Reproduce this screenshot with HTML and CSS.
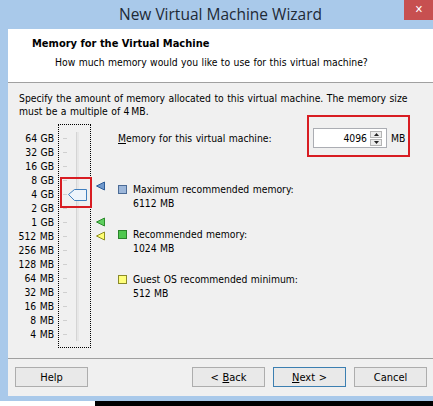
FILE: index.html
```html
<!DOCTYPE html>
<html>
<head>
<meta charset="utf-8">
<title>New Virtual Machine Wizard</title>
<link rel="stylesheet" href="styles.css">
</head>
<body>
<div class="window">
  <div class="titlebar">
    <div class="title">New Virtual Machine Wizard</div>
    <div class="close">&#x2715;</div>
  </div>
  <div class="client">
    <div class="header">
      <div class="h-title">Memory for the Virtual Machine</div>
      <div class="h-sub">How much memory would you like to use for this virtual machine?</div>
    </div>
    <div class="body">
      <p class="desc">Specify the amount of memory allocated to this virtual machine. The memory size<br>must be a multiple of 4&#8201;MB.</p>
      <div class="main">
        <ul class="scale">
          <li>64 GB</li><li>32 GB</li><li>16 GB</li><li>8 GB</li><li>4 GB</li><li>2 GB</li><li>1 GB</li>
          <li>512 MB</li><li>256 MB</li><li>128 MB</li><li>64 MB</li><li>32 MB</li><li>16 MB</li><li>8 MB</li><li>4 MB</li>
        </ul>
        <div class="slider">
          <svg width="31" height="222" viewBox="0 0 31 222">
            <g stroke="#cfcfcf" stroke-width="1">
              <line x1="4" y1="13.5" x2="8" y2="13.5"/>
              <line x1="4" y1="27.5" x2="8" y2="27.5"/>
              <line x1="4" y1="41.5" x2="8" y2="41.5"/>
              <line x1="4" y1="55.5" x2="8" y2="55.5"/>
              <line x1="4" y1="69.5" x2="8" y2="69.5"/>
              <line x1="4" y1="83.5" x2="8" y2="83.5"/>
              <line x1="4" y1="97.5" x2="8" y2="97.5"/>
              <line x1="4" y1="111.5" x2="8" y2="111.5"/>
              <line x1="4" y1="125.5" x2="8" y2="125.5"/>
              <line x1="4" y1="139.5" x2="8" y2="139.5"/>
              <line x1="4" y1="153.5" x2="8" y2="153.5"/>
              <line x1="4" y1="167.5" x2="8" y2="167.5"/>
              <line x1="4" y1="181.5" x2="8" y2="181.5"/>
              <line x1="4" y1="195.5" x2="8" y2="195.5"/>
              <line x1="4" y1="209.5" x2="8" y2="209.5"/>
            </g>
            <rect x="17" y="7" width="3" height="209" fill="#e7e7e7"/>
            <line x1="17.5" y1="7" x2="17.5" y2="216" stroke="#d4d4d4"/>
            <path d="M9.5 69.5 L15.5 64.5 L27.5 64.5 L27.5 75.5 L15.5 75.5 Z" fill="#eef4fb" stroke="#3f7fbf" stroke-width="1"/>
          </svg>
          <div class="annot thumb-annot"></div>
        </div>
        <div class="markers">
          <svg width="14" height="224" viewBox="0 0 14 224">
            <polygon points="4.5,62 12.5,58 12.5,66" fill="#6f98cc" stroke="#2d5d98"/>
            <polygon points="4.5,98 12.5,94 12.5,102" fill="#5fd05f" stroke="#2e8c2e"/>
            <polygon points="4.5,112 12.5,108 12.5,116" fill="#ffff72" stroke="#8f8f20"/>
          </svg>
        </div>
        <div class="info">
          <div class="mem-row">
            <label class="mem-label"><u>M</u>emory for this virtual machine:</label>
            <div class="spin-wrap">
              <div class="spin">
                <span class="val">4096</span>
                <div class="arrows">
                  <div class="arr"><svg width="7" height="4" viewBox="0 0 7 4"><polygon points="3.5,0 7,4 0,4" fill="#222"/></svg></div>
                  <div class="arr"><svg width="7" height="4" viewBox="0 0 7 4"><polygon points="0,0 7,0 3.5,4" fill="#222"/></svg></div>
                </div>
              </div>
              <span class="unit">MB</span>
              <div class="annot mem-annot"></div>
            </div>
          </div>
          <div class="legend">
            <div class="item"><span class="sq sq-blue"></span><div>Maximum recommended memory:<br>6112 MB</div></div>
            <div class="item"><span class="sq sq-green"></span><div>Recommended memory:<br>1024 MB</div></div>
            <div class="item"><span class="sq sq-yellow"></span><div>Guest OS recommended minimum:<br>512 MB</div></div>
          </div>
        </div>
      </div>
    </div>
    <div class="footer">
      <button class="btn">Help</button>
      <div class="btn-group">
        <button class="btn">&lt; <u>B</u>ack</button>
        <button class="btn btn-default"><u>N</u>ext &gt;</button>
        <button class="btn">Cancel</button>
      </div>
    </div>
  </div>
  <div class="bottom"><div class="bottom-white"></div><div class="bottom-black"></div></div>
</div>
</body>
</html>
```

FILE: styles.css
```css
* { box-sizing: border-box; }
html, body { margin: 0; padding: 0; }
body {
  background: #ffffff;
  font-family: "DejaVu Sans Condensed", "DejaVu Sans", sans-serif;
  font-stretch: condensed;
  font-size: 10.3px;
  word-spacing: 0.5px;
  color: #000;
}
.window {
  width: 433px;
  height: 406px;
  background: #a9c9ea;
  display: flex;
  flex-direction: column;
  overflow: hidden;
}
.titlebar {
  height: 29px;
  display: grid;
  grid-template-columns: 1fr;
  padding-left: 8px;
}
.title {
  grid-area: 1 / 1;
  text-align: center;
  font-family: "Open Sans", "Noto Sans", sans-serif;
  font-stretch: normal;
  font-size: 15.5px;
  word-spacing: 0;
  line-height: 29px;
  color: #1e2a36;
}
.close {
  grid-area: 1 / 1;
  justify-self: end;
  align-self: start;
  width: 29px;
  height: 20px;
  background: #c75050;
  color: #fff;
  font-family: "DejaVu Sans", sans-serif;
  font-size: 11px;
  font-weight: bold;
  line-height: 20px;
  text-align: center;
  padding-left: 1px;
}
.client {
  margin-left: 8px;
  height: 367px;
  background: #f0f0f0;
  display: flex;
  flex-direction: column;
}
.header {
  height: 54px;
  background: #fff;
  border-bottom: 1px solid #a0a0a0;
  padding-top: 8px;
}
.h-title {
  font-weight: bold;
  font-size: 11px;
  word-spacing: 0;
  line-height: 14px;
  padding-left: 24px;
}
.h-sub {
  line-height: 14px;
  padding-left: 47px;
  margin-top: 4px;
}
.body {
  height: 275px;
  padding-top: 9px;
}
.desc {
  margin: 0 0 6px 11px;
  line-height: 13px;
}
.main {
  display: flex;
  align-items: flex-start;
}
.scale {
  list-style: none;
  margin: 7px 0 0;
  padding: 0;
  width: 46px;
  text-align: right;
}
.scale li {
  line-height: 14px;
  white-space: nowrap;
}
.slider {
  position: relative;
  margin-left: 4px;
  width: 33px;
  height: 224px;
  border: 1px dotted #000;
}
.slider svg { display: block; }
.annot {
  position: absolute;
  border: 2px solid #d81c22;
}
.thumb-annot {
  left: 1px;
  top: 52px;
  width: 32px;
  height: 31px;
}
.markers {
  width: 14px;
  margin-left: 1px;
}
.markers svg { display: block; }
.info {
  margin-left: 12px;
  flex: 1;
}
.mem-row {
  display: flex;
  align-items: center;
  padding-top: 4px;
}
.mem-label {
  width: 195px;
  line-height: 14px;
}
.spin-wrap {
  position: relative;
  display: flex;
  align-items: center;
}
.spin {
  width: 74px;
  height: 20px;
  background: #fff;
  border: 1px solid #abadb3;
  display: flex;
  align-items: center;
  padding-right: 4px;
}
.val {
  flex: 1;
  text-align: right;
  margin-right: 3px;
}
.arrows {
  display: flex;
  flex-direction: column;
  gap: 1px;
}
.arr {
  width: 12px;
  height: 7px;
  border: 1px solid #b4b4b4;
  background: #ececec;
  display: flex;
  align-items: center;
  justify-content: center;
}
.arr svg { display: block; width: 5px; height: 3px; }
.unit {
  margin-left: 4px;
}
.mem-annot {
  left: -6px;
  top: -13px;
  width: 103px;
  height: 42px;
}
.legend {
  margin-top: 34px;
  display: flex;
  flex-direction: column;
  gap: 17px;
}
.item {
  display: flex;
  align-items: flex-start;
  line-height: 14px;
}
.sq {
  width: 9px;
  height: 9px;
  margin-top: 3px;
  margin-right: 6px;
  flex: none;
  border: 1px solid;
}
.sq-blue { background: #9db7da; border-color: #4b6b96; }
.sq-green { background: #4fc84f; border-color: #2b832b; }
.sq-yellow { background: #ffff7a; border-color: #8a8a2a; }
.footer {
  flex: 1;
  border-top: 1px solid #a0a0a0;
  display: flex;
  align-items: flex-start;
  padding: 8px 6px 0 7px;
}
.btn-group {
  margin-left: auto;
  display: flex;
  gap: 8px;
}
.btn {
  width: 73px;
  height: 20px;
  border: 1px solid #adadad;
  background: #e9e9e9;
  font-family: inherit;
  font-stretch: condensed;
  font-size: 11px;
  word-spacing: 0.5px;
  color: #000;
  padding: 0;
  margin: 0;
}
.btn-default {
  border-color: #3c7fb1;
}
.bottom {
  margin-top: 5px;
  flex: 1;
  display: flex;
}
.bottom-white { width: 95px; background: #fff; }
.bottom-black { flex: 1; background: #000; }
```
